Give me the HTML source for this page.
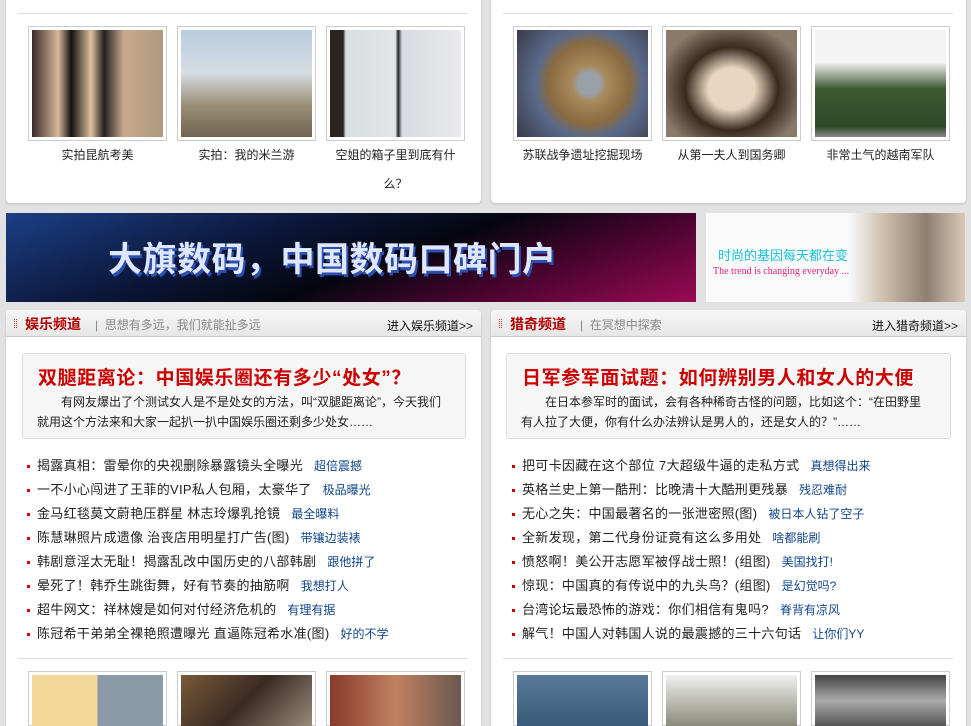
<!DOCTYPE html>
<html><head><meta charset="utf-8"><style>
*{margin:0;padding:0;box-sizing:border-box}
html,body{width:971px;height:726px;overflow:hidden}
body{background:#e2e2e2;font-family:"Liberation Sans","Noto Sans CJK SC","WenQuanYi Zen Hei",sans-serif;font-size:12px;color:#222;position:relative}
.a{position:absolute}
.panel{position:absolute;background:#fff;border-radius:4px;box-shadow:0 1px 2px #bbb}
.hr{position:absolute;height:1px;background:#ddd}
.fr{position:absolute;width:139px;height:115px;border:1px solid #ccc;background:#fff;padding:3px}
.fr div{width:131px;height:107px}
.fr.b{height:55px}
.fr.b div{height:51px}
.cap{position:absolute;width:139px;text-align:center;font-size:12px;line-height:29px;color:#222}
.hd{position:absolute;height:27px;background:linear-gradient(#f7f7f7,#e6e6e6);border-bottom:1px solid #c8c8c8;border-radius:4px 4px 0 0}
.hd .t{position:absolute;left:19px;top:4px;font-size:14px;font-weight:bold;color:#b10000}
.hd .dot{position:absolute;left:8px;top:9px;width:3px;height:9px;border-left:1px dotted #c33;border-right:1px dotted #c33}
.hd .s{position:absolute;top:6px;color:#888;font-size:12px}
.hd .m{position:absolute;right:8px;top:7px;font-size:12px;color:#111}
.feat{position:absolute;height:86px;border:1px solid #ddd;border-radius:3px;background:#f6f6f6}
.feat h2{position:absolute;left:15px;top:9px;font-size:19px;color:#c00;font-weight:bold;letter-spacing:0.6px;white-space:nowrap}
.feat p{position:absolute;left:14px;top:38px;width:410px;font-size:12px;line-height:20px;text-indent:24px;color:#222}
ul{position:absolute;list-style:none}
li{height:24px;line-height:24px;font-size:13px;letter-spacing:0.3px;white-space:nowrap;padding-left:10px;position:relative;color:#222}
li:before{content:"";position:absolute;left:0;top:11px;width:3px;height:3px;background:#c00}
li span{color:#13478a;font-size:12px;margin-left:11px;letter-spacing:0}
</style></head><body>

<div class="panel" style="left:6px;top:-5px;width:475px;height:208px"></div>
<div class="panel" style="left:491px;top:-5px;width:475px;height:208px"></div>
<div class="hr" style="left:18px;top:13px;width:450px"></div>
<div class="hr" style="left:503px;top:13px;width:450px"></div>

<div class="fr" style="left:28px;top:26px"><div style="background:linear-gradient(90deg,#3a2a2a,#d8b89a 20%,#111 30%,#e0c0a0 45%,#222 55%,#c9a88c 70%,#ad9a80);"></div></div>
<div class="fr" style="left:177px;top:26px"><div style="background:linear-gradient(#b9cde0,#d6dde3 40%,#9a9078 70%,#6e6450)"></div></div>
<div class="fr" style="left:326px;top:26px"><div style="background:linear-gradient(90deg,#2a2420 10%,#d7dde0 12%,#e3e6e8 50%,#222 52%,#d8dbe0 55%,#e9e9ec)"></div></div>
<div class="cap" style="left:28px;top:141px">实拍昆航考美</div>
<div class="cap" style="left:177px;top:141px">实拍：我的米兰游</div>
<div class="cap" style="left:326px;top:141px">空姐的箱子里到底有什<br>么？</div>

<div class="fr" style="left:513px;top:26px"><div style="background:radial-gradient(circle at 55% 50%,#9aa0a8 12%,#a88a5c 20%,#8a6a40 45%,#5a6a8a 60%,#3a3a4a)"></div></div>
<div class="fr" style="left:662px;top:26px"><div style="background:radial-gradient(ellipse at 50% 55%,#e8d6c0 25%,#3a2a1e 50%,#8a7a6a 80%)"></div></div>
<div class="fr" style="left:811px;top:26px"><div style="background:linear-gradient(#f4f4f4 30%,#3e5a32 55%,#2e4a26 90%,#888)"></div></div>
<div class="cap" style="left:513px;top:141px">苏联战争遗址挖掘现场</div>
<div class="cap" style="left:662px;top:141px">从第一夫人到国务卿</div>
<div class="cap" style="left:811px;top:141px">非常土气的越南军队</div>

<div class="a" style="left:6px;top:213px;width:690px;height:89px;background:linear-gradient(160deg,#1d3f86 0%,#0b1638 35%,#05060f 55%,#4a0430 75%,#9a0a55 100%)">
<div class="a" style="left:102px;top:19px;font-size:34px;font-weight:bold;color:#dfe6ff;letter-spacing:0.5px;text-shadow:2px 3px 0 #2b4fb0;white-space:nowrap;font-family:'Noto Sans CJK SC',sans-serif">大旗数码，中国数码口碑门户</div></div>
<div class="a" style="left:706px;top:213px;width:259px;height:89px;background:linear-gradient(90deg,#fafafa 55%,#c9b8a4 70%,#8f7f70 85%,#d8c8b8)">
<div class="a" style="left:12px;top:32px;color:#18c3d8;font-size:13px">时尚的基因每天都在变</div>
<div class="a" style="left:7px;top:53px;color:#e0207a;font-size:10px;font-family:'Liberation Serif',serif">The trend is changing everyday ...</div></div>

<div class="panel" style="left:6px;top:310px;width:475px;height:416px;border-radius:4px 4px 0 0"></div>
<div class="panel" style="left:491px;top:310px;width:475px;height:416px;border-radius:4px 4px 0 0"></div>

<div class="hd" style="left:6px;top:310px;width:475px"><i class="dot"></i><span class="t">娱乐频道</span><span class="s" style="left:89px">|&nbsp; 思想有多远，我们就能扯多远</span><span class="m">进入娱乐频道&gt;&gt;</span></div>
<div class="hd" style="left:491px;top:310px;width:475px"><i class="dot"></i><span class="t">猎奇频道</span><span class="s" style="left:89px">|&nbsp; 在冥想中探索</span><span class="m">进入猎奇频道&gt;&gt;</span></div>

<div class="feat" style="left:22px;top:353px;width:444px"><h2>双腿距离论：中国娱乐圈还有多少“处女”？</h2><p>有网友爆出了个测试女人是不是处女的方法，叫“双腿距离论”，今天我们就用这个方法来和大家一起扒一扒中国娱乐圈还剩多少处女……</p></div>
<div class="feat" style="left:506px;top:353px;width:445px"><h2>日军参军面试题：如何辨别男人和女人的大便</h2><p>在日本参军时的面试，会有各种稀奇古怪的问题，比如这个：“在田野里有人拉了大便，你有什么办法辨认是男人的，还是女人的？”……</p></div>

<ul style="left:27px;top:454px">
<li>揭露真相：雷晕你的央视删除暴露镜头全曝光<span>超倍震撼</span></li>
<li>一不小心闯进了王菲的VIP私人包厢，太豪华了<span>极品曝光</span></li>
<li>金马红毯莫文蔚艳压群星 林志玲爆乳抢镜<span>最全曝料</span></li>
<li>陈慧琳照片成遗像 治丧店用明星打广告(图)<span>带镶边装裱</span></li>
<li>韩剧意淫太无耻！揭露乱改中国历史的八部韩剧<span>跟他拼了</span></li>
<li>晕死了！韩乔生跳街舞，好有节奏的抽筋啊<span>我想打人</span></li>
<li>超牛网文：祥林嫂是如何对付经济危机的<span>有理有据</span></li>
<li>陈冠希干弟弟全裸艳照遭曝光 直逼陈冠希水准(图)<span>好的不学</span></li>
</ul>
<ul style="left:512px;top:454px">
<li>把可卡因藏在这个部位 7大超级牛逼的走私方式<span>真想得出来</span></li>
<li>英格兰史上第一酷刑：比晚清十大酷刑更残暴<span>残忍难耐</span></li>
<li>无心之失：中国最著名的一张泄密照(图)<span>被日本人钻了空子</span></li>
<li>全新发现，第二代身份证竟有这么多用处<span>啥都能刷</span></li>
<li>愤怒啊！美公开志愿军被俘战士照！(组图)<span>美国找打!</span></li>
<li>惊现：中国真的有传说中的九头鸟？(组图)<span>是幻觉吗?</span></li>
<li>台湾论坛最恐怖的游戏：你们相信有鬼吗?<span>脊背有凉风</span></li>
<li>解气！中国人对韩国人说的最震撼的三十六句话<span>让你们YY</span></li>
</ul>

<div class="hr" style="left:18px;top:658px;width:450px"></div>
<div class="hr" style="left:503px;top:658px;width:450px"></div>

<div class="fr b" style="left:28px;top:671px"><div style="background:linear-gradient(90deg,#f2d89a 50%,#8a9aa8 50%)"></div></div>
<div class="fr b" style="left:177px;top:671px"><div style="background:linear-gradient(135deg,#7a5a3a,#3a2a22 50%,#9a8a7a)"></div></div>
<div class="fr b" style="left:326px;top:671px"><div style="background:linear-gradient(90deg,#8a3a2a,#c08060 50%,#6a5a50)"></div></div>
<div class="fr b" style="left:513px;top:671px"><div style="background:linear-gradient(#5a7a9a,#3a5a7a)"></div></div>
<div class="fr b" style="left:662px;top:671px"><div style="background:linear-gradient(#f0f0f0,#8a8a7a)"></div></div>
<div class="fr b" style="left:811px;top:671px"><div style="background:linear-gradient(#444,#aaa 50%,#555)"></div></div>
</body></html>
